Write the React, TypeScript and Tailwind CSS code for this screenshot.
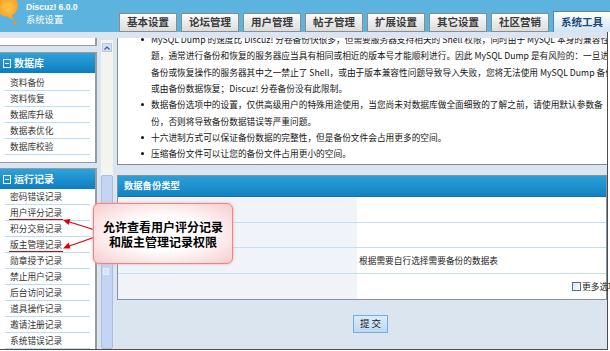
const tabs = ['基本设置', '论坛管理', '用户管理', '帖子管理', '扩展设置', '其它设置', '社区营销', '系统工具'];

const dbItems = ['资料备份', '资料恢复', '数据库升级', '数据表优化', '数据库校验'];
const logItems = [
  '密码错误记录',
  '用户评分记录',
  '积分交易记录',
  '版主管理记录',
  '勋章授予记录',
  '禁止用户记录',
  '后台访问记录',
  '道具操作记录',
  '邀请注册记录',
  '系统错误记录',
];

const notes = [
  { bullet: true, text: 'MySQL Dump 的速度比 Discuz! 分卷备份快很多，但需要服务器支持相关的 Shell 权限，同时由于 MySQL 本身的兼容性问' },
  { bullet: false, text: '题，通常进行备份和恢复的服务器应当具有相同或相近的版本号才能顺利进行。因此 MySQL Dump 是有风险的：一旦进行' },
  { bullet: false, text: '备份或恢复操作的服务器其中之一禁止了 Shell，或由于版本兼容性问题导致导入失败，您将无法使用 MySQL Dump 备份' },
  { bullet: false, text: '或由备份数据恢复；Discuz! 分卷备份没有此限制。' },
  { bullet: true, text: '数据备份选项中的设置，仅供高级用户的特殊用途使用，当您尚未对数据库做全面细致的了解之前，请使用默认参数备' },
  { bullet: false, text: '份，否则将导致备份数据错误等严重问题。' },
  { bullet: true, text: '十六进制方式可以保证备份数据的完整性，但是备份文件会占用更多的空间。' },
  { bullet: true, text: '压缩备份文件可以让您的备份文件占用更小的空间。' },
];

function Logo() {
  return (
    <svg width="26" height="32" viewBox="0 0 26 32" className="shrink-0">
      <defs>
        <radialGradient id="bulb" cx="0.55" cy="0.5" r="0.6">
          <stop offset="0" stopColor="#ffc94a" />
          <stop offset="1" stopColor="#f7931e" />
        </radialGradient>
      </defs>
      <path d="M-4 6 A11 11 0 1 1 12 15.5 L13.5 20.5 L7.5 16.5 A11 11 0 0 1 -4 6 Z" fill="url(#bulb)" />
      <circle cx="15" cy="23" r="1.8" fill="#f7931e" />
    </svg>
  );
}

function MinusBox() {
  return (
    <svg width="8" height="9" viewBox="0 0 8 9" className="shrink-0">
      <rect x="0.5" y="0.5" width="7" height="8" fill="none" stroke="#fff" strokeWidth="1" />
      <line x1="2" y1="4.5" x2="6" y2="4.5" stroke="#fff" strokeWidth="1" />
    </svg>
  );
}

function MenuHeader({ title }: { title: string }) {
  return (
    <div className="flex h-[20px] items-center gap-[3px] bg-linear-to-b from-[#2ea3db] to-[#0a7dc0] pl-[3px] text-[10px] font-bold leading-none text-white">
      <MinusBox />
      {title}
    </div>
  );
}

function MenuItem({ label }: { label: string }) {
  return (
    <div className="mx-[5px] h-[16px] border-b border-[#bddcf2] pl-[5px] text-[8.7px] leading-[15px] text-[#333]">
      {label}
    </div>
  );
}

export default function App() {
  return (
    <div className="relative h-[351px] w-[610px] overflow-hidden bg-white font-['Noto_Sans_CJK_SC',sans-serif]">
      {/* Header */}
      <div className="flex h-[32px] bg-[#5cb4de]">
        <div className="flex w-[119px] shrink-0">
          <Logo />
          <div className="flex flex-col pt-[2px] text-white">
            <span className="font-['Liberation_Sans',sans-serif] text-[8.5px] font-bold leading-[11px]">Discuz! 6.0.0</span>
            <span className="text-[9.3px] leading-[13px]">系统设置</span>
          </div>
        </div>
        <div className="flex items-end gap-[4px]">
          {tabs.map((t, i) =>
            i === tabs.length - 1 ? (
              <div
                key={t}
                className="flex h-[21px] w-[58px] shrink-0 items-center justify-center border border-b-0 border-[#5f86a8] bg-linear-to-b from-white to-[#d0e4f4] text-[10.5px] font-bold leading-none text-[#1b4c7c]"
              >
                {t}
              </div>
            ) : (
              <div
                key={t}
                className="flex h-[19px] w-[58px] shrink-0 items-center justify-center border border-[#8c8c8c] bg-linear-to-b from-[#fbfbfb] to-[#dcdcdc] text-[10.5px] font-bold leading-none text-[#3c3c3c]"
              >
                {t}
              </div>
            )
          )}
        </div>
      </div>

      {/* Body */}
      <div className="flex h-[318px] w-[608px] border-r border-b border-[#4d4d4d] bg-[#dae5f0]">
        {/* Sidebar */}
        <div className="w-[97px] shrink-0 overflow-hidden pt-[6px]">
          <div className="h-[8px] border-r-2 border-b border-[#9b9b9b] bg-white" />
          <div className="mt-[6px] border-y border-r-2 border-[#9b9b9b] bg-white">
            <MenuHeader title="数据库" />
            <div className="pt-[2px] pb-[7px]">
              {dbItems.map((l) => (
                <MenuItem key={l} label={l} />
              ))}
            </div>
          </div>
          <div className="mt-[5px] border-t border-r-2 border-[#9b9b9b] bg-white">
            <MenuHeader title="运行记录" />
            {logItems.map((l) => (
              <MenuItem key={l} label={l} />
            ))}
          </div>
        </div>

        {/* Scrollbar */}
        <div className="mt-[8px] ml-[4px] flex w-[12px] shrink-0 flex-col bg-[#f4f4ef]">
          <div className="h-[135px] pt-[3px]">
            <div className="ml-[1px] flex h-[9px] w-[10px] items-center justify-center border border-[#b5c7e6] bg-[#d3dff3]">
              <svg width="6" height="4" viewBox="0 0 6 4">
                <path d="M0.5 3.5 L3 1 L5.5 3.5" fill="none" stroke="#3a5a8c" strokeWidth="1.2" />
              </svg>
            </div>
          </div>
          <div className="relative flex-1 rounded-[2px] border border-[#a9bde4] bg-[#c4d4f4]">
            <div className="absolute top-[92px] left-[1px] h-[7px] w-[6px] border border-[#e6eefc] bg-[#d6e2f8]" />
          </div>
        </div>

        {/* Main */}
        <div className="ml-[4px] w-[490px] shrink-0">
          <div className="mt-[6px] h-[127px] overflow-hidden border-b border-l border-[#7f8d9a] bg-white">
            <div className="-mt-[6.5px] pl-[23px] text-[8.7px] text-[#141414]">
              {notes.map((n, i) => (
                <div key={i} className="flex h-[16.3px] items-center whitespace-nowrap">
                  <span className="flex w-[10px] shrink-0 items-center">
                    {n.bullet && <span className="h-[3px] w-[3px] rounded-full bg-[#111]" />}
                  </span>
                  {n.text}
                </div>
              ))}
            </div>
          </div>

          <div className="mt-[10px] border border-[#8393a2] bg-white">
            <div className="flex h-[21px] items-center border-b border-[#2a6a92] bg-linear-to-b from-[#2c9fd7] to-[#0f83c3] pl-[6px] text-[9.3px] font-bold text-white">
              数据备份类型
            </div>
            {[26, 25, 26, 25].map((h, i) => (
              <div
                key={i}
                className={`flex text-[8.7px] text-[#222] ${i < 3 ? 'border-b border-[#c8dcef]' : ''}`}
                style={{ height: h }}
              >
                <div className="w-[239px] shrink-0 bg-[#f0f4f8]" />
                <div className="flex flex-1 items-center pl-[2px] whitespace-nowrap">
                  {i === 2 && '根据需要自行选择需要备份的数据表'}
                  {i === 3 && (
                    <>
                      <span className="ml-[213px] h-[9px] w-[9px] border border-[#4f6f8f] bg-linear-to-br from-[#dfe6ee] to-white" />
                      <span className="ml-[1px]">更多选项</span>
                    </>
                  )}
                </div>
              </div>
            ))}
          </div>

          <div className="mt-[15px] ml-[236px] flex h-[18px] w-[35px] items-center justify-center border border-[#76acdf] bg-linear-to-b from-[#dcecfb] to-[#bcd8f4] text-[9.5px] leading-none text-[#1a1a1a]">
            提 交
          </div>
        </div>
      </div>

      {/* Annotation arrows */}
      <svg className="pointer-events-none absolute top-0 left-0" width="610" height="351">
        <line x1="9" y1="219.5" x2="63" y2="219.5" stroke="#e00000" strokeWidth="1.2" />
        <line x1="9" y1="251.5" x2="63" y2="251.5" stroke="#e00000" strokeWidth="1.2" />
        <line x1="95" y1="230" x2="68" y2="221.5" stroke="#e00000" strokeWidth="1.3" />
        <path d="M63 220 L70.5 219 L68.5 225 Z" fill="#e00000" />
        <line x1="95" y1="237" x2="68" y2="246.5" stroke="#e00000" strokeWidth="1.3" />
        <path d="M63 248.5 L68.5 242.5 L70.5 248.5 Z" fill="#e00000" />
      </svg>

      {/* Callout */}
      <div className="absolute top-[203px] left-[93px] flex h-[61px] w-[140px] flex-col items-center justify-center rounded-[6px] border border-[#ec8585] bg-[radial-gradient(ellipse_at_center,#ffffff_40%,#f8cccc_100%)] text-[12px] leading-[15px] font-bold text-black shadow-[0_0_3px_#f5a5a5]">
        <span>允许查看用户评分记录</span>
        <span>和版主管理记录权限</span>
      </div>
    </div>
  );
}
